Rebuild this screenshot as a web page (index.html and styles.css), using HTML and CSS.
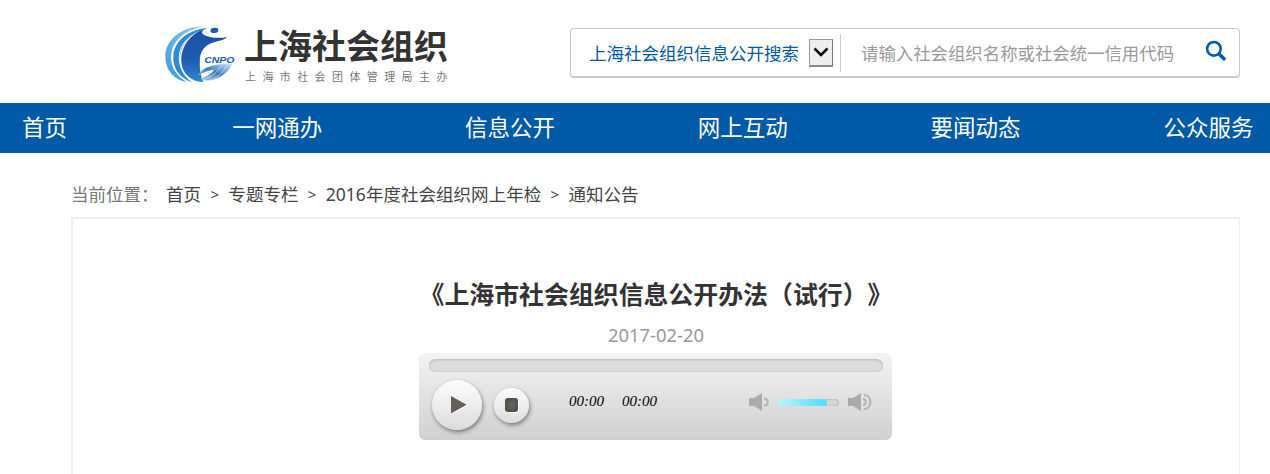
FILE: index.html
```html
<!DOCTYPE html>
<html lang="zh-CN">
<head>
    <meta charset="UTF-8">
    <meta name="viewport" content="width=device-width, initial-scale=1.0">
    <title>上海社会组织</title>
    <link rel="stylesheet" href="styles.css">
</head>
<body>
    <div class="header">
        <a class="logo" href="#">
            <svg class="logo-mark" viewBox="27 33 215 175">
                <defs>
                    <linearGradient id="body" x1="0" y1="0" x2="0" y2="1">
                        <stop offset="0" stop-color="#1c4fa0"/>
                        <stop offset="0.6" stop-color="#1d5eb0"/>
                        <stop offset="1" stop-color="#2f86d0"/>
                    </linearGradient>
                    <linearGradient id="arc" x1="1" y1="0" x2="0" y2="1">
                        <stop offset="0" stop-color="#8fc9ec"/>
                        <stop offset="1" stop-color="#3a97da"/>
                    </linearGradient>
                    <linearGradient id="tail" x1="0" y1="1" x2="1" y2="0">
                        <stop offset="0" stop-color="#b5cfea"/>
                        <stop offset="0.5" stop-color="#3a7fc4"/>
                        <stop offset="1" stop-color="#d4e5f4"/>
                    </linearGradient>
                </defs>
                <path fill="url(#arc)" d="M148 35C85 32 30 72 30 124C30 166 55 196 98 203C62 184 45 154 49 120C54 75 95 43 148 35Z"/>
                <path fill="#2e8bd3" d="M158 38C101 43 57 76 54 123C51 160 73 190 110 203C84 181 71 155 74 125C78 82 111 52 158 38Z"/>
                <path fill="none" stroke="#fff" stroke-width="3" d="M151 36C92 43 51 76 49 122C47 160 70 190 103 204M158 42C108 53 74 85 72 124C71 157 86 186 112 202"/>
                <path fill="url(#body)" d="M157 39C138 45 137 56 147 60C165 69 194 71 216 66C207 77 183 78 166 86C142 98 134 116 134 140C133 165 137 187 145 202C103 202 76 170 78 132C80 88 111 51 157 39Z"/>
                <ellipse cx="178" cy="46" rx="12" ry="8" fill="#2157a6" transform="rotate(-5 178 46)"/>
                <path fill="url(#tail)" d="M127 184C145 154 177 147 232 148C226 163 207 184 179 194C160 200 146 198 135 192C154 186 170 177 177 164C160 167 144 172 127 184Z"/>
                <path fill="none" stroke="#fff" stroke-width="1.5" d="M144 194C168 189 187 173 198 152M160 197C187 190 205 174 215 152"/>
                <text class="logo-abbr" x="147" y="146" textLength="91" lengthAdjust="spacingAndGlyphs">CNPO</text>
            </svg>
            <div class="logo-text">
                <div class="logo-name">上海社会组织</div>
                <div class="logo-sub">上海市社会团体管理局主办</div>
            </div>
        </a>
        <div class="search">
            <span class="search-type">上海社会组织信息公开搜索</span>
            <button class="search-arrow">
                <svg width="16" height="12" viewBox="0 0 16 12"><path d="M1.5 2.5L8 9L14.5 2.5" fill="none" stroke="#000" stroke-width="2.5"/></svg>
            </button>
            <input class="search-input" type="text" placeholder="请输入社会组织名称或社会统一信用代码">
            <svg class="search-icon" width="22" height="22" viewBox="0 0 22 22" fill="none" stroke="#005aa7">
                <circle cx="8.9" cy="8.8" r="6.8" stroke-width="2.6"/>
                <path d="M14 14L19 18.8" stroke-width="3.6" stroke-linecap="round"/>
            </svg>
        </div>
    </div>

    <div class="nav">
        <ul>
            <li><a href="#">首页</a></li>
            <li><a href="#">一网通办</a></li>
            <li><a href="#">信息公开</a></li>
            <li><a href="#">网上互动</a></li>
            <li><a href="#">要闻动态</a></li>
            <li><a href="#">公众服务</a></li>
        </ul>
    </div>

    <div class="container">
        <div class="crumbs">
            <span class="crumbs-label">当前位置：</span>
            <a href="#">首页</a><i>&gt;</i><a href="#">专题专栏</a><i>&gt;</i><a href="#">2016年度社会组织网上年检</a><i>&gt;</i><a href="#">通知公告</a>
        </div>
        <div class="article">
            <h1>《上海市社会组织信息公开办法（试行）》</h1>
            <div class="date">2017-02-20</div>
            <div class="player">
                <div class="progress"></div>
                <div class="controls">
                    <button class="play">
                        <svg width="18" height="20" viewBox="0 0 18 20"><path d="M1 1L17 10L1 19Z" fill="#625f57"/><path d="M1 19L17 10" stroke="#fff" stroke-width="1"/></svg>
                    </button>
                    <button class="stop"><span></span></button>
                    <span class="time">00:00</span>
                    <span class="time">00:00</span>
                    <div class="volume">
                        <svg width="21" height="20" viewBox="0 0 21 20">
                            <path d="M0 6H5L13 1V19L5 14H0Z" fill="#a9acae"/>
                            <path d="M15 6.5C20 6.5 20 13.5 15 13.5" fill="none" stroke="#b1b4b6" stroke-width="2"/>
                        </svg>
                        <div class="volume-bar"><div class="volume-value"></div></div>
                        <svg width="24" height="20" viewBox="0 0 24 20">
                            <path d="M0 6H5L13 1V19L5 14H0Z" fill="#a9acae"/>
                            <path d="M15 7C18.5 7 18.5 13 15 13M16 3C24.5 3 24.5 17 16 17" fill="none" stroke="#b1b4b6" stroke-width="2"/>
                        </svg>
                    </div>
                </div>
            </div>
        </div>
    </div>
</body>
</html>
```
FILE: styles.css
```css
* {
    box-sizing: border-box;
}
body {
    margin: 0;
    background: #fff;
    font-family: "Noto Sans", "Noto Sans CJK SC", sans-serif;
    font-size: 17.5px;
    color: #333;
}
a {
    color: inherit;
    text-decoration: none;
}
button {
    padding: 0;
    display: flex;
    align-items: center;
    justify-content: center;
}

/* header */
.header {
    height: 103px;
    padding: 26px 30px 0 164px;
    display: flex;
    justify-content: space-between;
    align-items: flex-start;
}
.logo {
    display: flex;
}
.logo-mark {
    width: 72px;
    height: 58px;
}
.logo-abbr {
    font: italic bold 29px "Liberation Sans", sans-serif;
    fill: #1d5ca8;
    stroke: #fff;
    stroke-width: 4px;
    paint-order: stroke;
}
.logo-text {
    padding-left: 8px;
    white-space: nowrap;
    font-family: "Noto Sans CJK SC", sans-serif;
}
.logo-name {
    margin-top: -1px;
    font-size: 34px;
    line-height: 40px;
    font-weight: bold;
}
.logo-sub {
    padding: 4px 0 0 1px;
    font-size: 11px;
    line-height: 14px;
    letter-spacing: 6.4px;
    color: #777;
}
.search {
    display: flex;
    align-items: center;
    width: 670px;
    height: 50px;
    margin-top: 2px;
    padding-left: 18px;
    border: 1px solid #c9c9c9;
    border-bottom-width: 2px;
    border-radius: 4px;
}
.search-type {
    color: #005aa7;
    width: 220px;
    white-space: nowrap;
}
.search-arrow {
    width: 24px;
    height: 28px;
    border: 1px solid #999;
    border-right-color: #777;
    border-bottom: 2px solid #888;
    background: #eee;
}
.search-input {
    width: 353px;
    height: 38px;
    margin-left: 7px;
    padding: 0 0 0 20px;
    border: 0;
    border-left: 1px solid #ccc;
    font: inherit;
    font-size: 17.4px;
    background: none;
}
.search-input::placeholder {
    color: #999;
}
.search-icon {
    margin: 0 0 3px 12px;
}

/* nav */
.nav {
    height: 50px;
    background: #005aa7;
    overflow: hidden;
}
.nav ul {
    display: flex;
    margin: 0 0 0 -72px;
    padding: 0;
    list-style: none;
}
.nav li {
    flex: 0 0 232.8px;
    text-align: center;
    font-size: 22.5px;
    line-height: 50px;
    color: #fff;
}

/* content */
.container {
    margin: 0 30px 0 71px;
}
.crumbs {
    height: 64px;
    padding-top: 28px;
    line-height: 26px;
    display: flex;
    font-size: 17.55px;
    color: #444;
}
.crumbs-label {
    width: 95px;
    color: #777;
    white-space: nowrap;
}
.crumbs i {
    width: 27.3px;
    text-align: center;
    font-style: normal;
    font-size: 15px;
}
.article {
    height: 257px;
    padding-top: 57px;
    border: 2px solid #eee;
    border-right-width: 1px;
    border-bottom: 0;
    text-align: center;
}
h1 {
    margin: 0;
    font-size: 24.9px;
    line-height: 36px;
    white-space: nowrap;
    text-spacing-trim: space-all;
}
.date {
    padding-top: 11px;
    font-size: 18.4px;
    line-height: 24px;
    color: #999;
}

/* audio player */
.player {
    width: 473px;
    height: 87px;
    margin: 6px 0 0 346px;
    padding: 6px 9px 0 10px;
    border-radius: 6px;
    background: linear-gradient(#f3f3f3, #d0d0d0);
}
.progress {
    height: 13px;
    border-radius: 7px;
    background: #dcdcdc;
    box-shadow: inset 0 1px 2px #bbb, inset 0 0 2px #bbb;
}
.controls {
    display: flex;
    align-items: center;
    height: 66px;
    padding-left: 3px;
}
.play,
.stop {
    border: 0;
    border-radius: 50%;
    background: linear-gradient(#fdfdfd, #dcdcdc);
    box-shadow: 1px 2px 4px rgba(0, 0, 0, 0.45);
}
.play {
    width: 50px;
    height: 50px;
    padding-left: 3px;
}
.stop {
    width: 35px;
    height: 35px;
    margin: 0 22px 0 12px;
}
.stop span {
    width: 13px;
    height: 14px;
    border-radius: 3px;
    background: radial-gradient(#68665f, #484743);
    box-shadow: 1px 1px 0 #fff;
}
.time {
    margin: 0 0 8px 18px;
    font: italic 15px "Liberation Serif", serif;
    color: #000;
}
.volume {
    display: flex;
    align-items: center;
    margin: 0 11px 6px auto;
}
.volume-bar {
    width: 62px;
    height: 7px;
    margin: 0 9px 0 7px;
    border-radius: 4px;
    background: #d5d5d5;
    box-shadow: inset 0 0 2px #999;
}
.volume-value {
    width: 50px;
    height: 7px;
    border-radius: 4px;
    background: linear-gradient(to right, #bdf4ff, #4edcff);
}
```
